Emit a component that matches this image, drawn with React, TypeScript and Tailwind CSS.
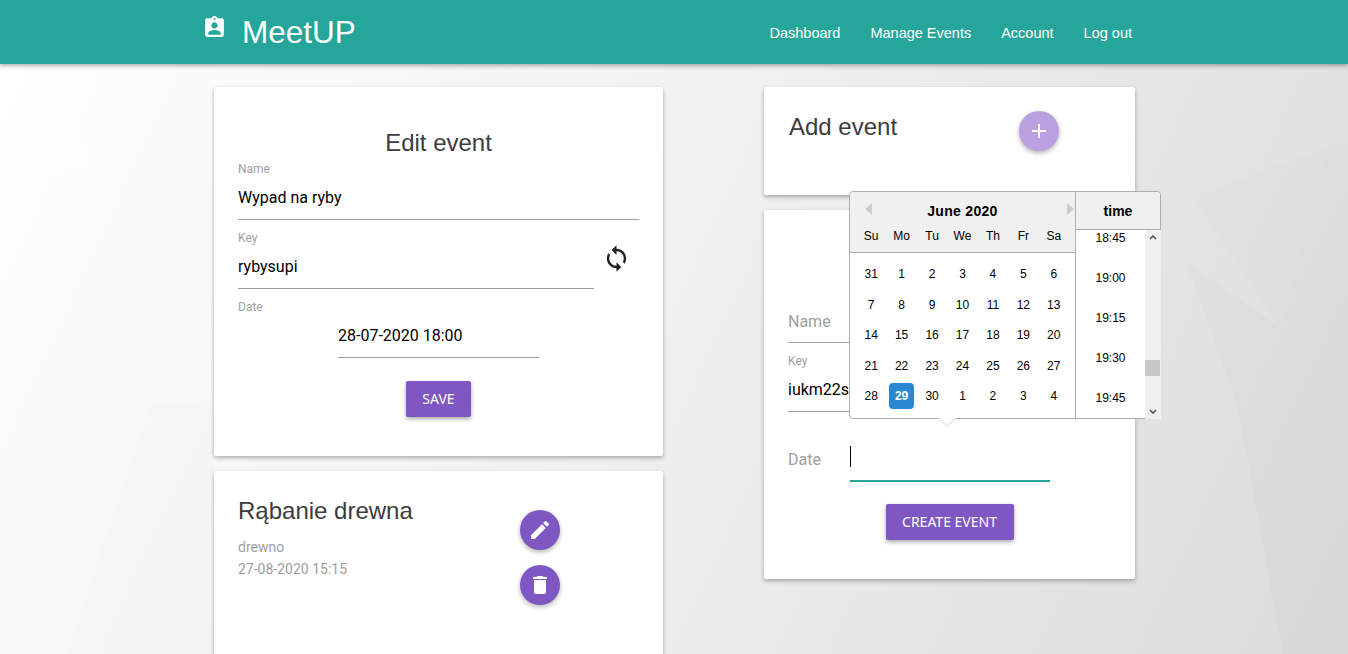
import { MdAssignmentInd, MdEdit, MdDelete, MdAdd, MdSync } from "react-icons/md";

const navLinks = ["Dashboard", "Manage Events", "Account", "Log out"];
const dayNames = ["Su", "Mo", "Tu", "We", "Th", "Fr", "Sa"];
const days = [31, 1, 2, 3, 4, 5, 6, 7, 8, 9, 10, 11, 12, 13, 14, 15, 16, 17, 18, 19, 20, 21, 22, 23, 24, 25, 26, 27, 28, 29, 30, 1, 2, 3, 4];
const times = ["18:45", "19:00", "19:15", "19:30", "19:45"];

function Field({ label, value, width }: { label: string; value: string; width: string }) {
  return (
    <div className={width}>
      <p className="text-[12px] leading-[14px] text-[#9e9e9e]">{label}</p>
      <div className="h-[44px] border-b border-[#9e9e9e] pt-[10px] text-[16px] leading-[24px] text-black">{value}</div>
    </div>
  );
}

function Fab({ children, pale }: { children: React.ReactNode; pale?: boolean }) {
  return (
    <div className={`flex h-10 w-10 items-center justify-center rounded-full text-white shadow-[0_2px_5px_rgba(0,0,0,0.3)] ${pale ? "bg-[#b9a1e0]" : "bg-[#7e57c2]"}`}>
      {children}
    </div>
  );
}

function DatePicker() {
  return (
    <div className="absolute left-[85px] top-[-19px] z-10 flex h-[228px] w-[312px] rounded-[4px] border border-[#aeaeae] bg-white font-['Liberation_Sans',sans-serif] text-black">
      <div className="w-[226px] border-r border-[#aeaeae]">
        <div className="relative h-[61px] rounded-tl-[4px] border-b border-[#aeaeae] bg-[#f0f0f0]">
          <span className="absolute left-[15px] top-[11px] h-0 w-0 border-y-[6px] border-r-[7px] border-y-transparent border-r-[#ccc]" />
          <span className="absolute right-[1px] top-[11px] h-0 w-0 border-y-[6px] border-l-[7px] border-y-transparent border-l-[#ccc]" />
          <p className="pt-[11px] text-center text-[14px] font-bold leading-[16px] tracking-[0.3px]">June 2020</p>
          <div className="mt-[9px] grid grid-cols-7 pl-[6px] pr-[6px] text-[12px] leading-[16px]">
            {dayNames.map((d) => (
              <span key={d} className="text-center">{d}</span>
            ))}
          </div>
        </div>
        <div className="grid grid-cols-7 pl-[6px] pr-[6px] pt-[6px] text-[12px]">
          {days.map((d, i) => (
            <div key={i} className="flex h-[30.5px] items-center justify-center">
              <span className={`flex h-[26px] w-[25px] items-center justify-center rounded-[4px] ${d === 29 ? "bg-[#2a87d0] font-bold text-white" : ""}`}>{d}</span>
            </div>
          ))}
        </div>
      </div>
      <div className="flex w-[84px] flex-col">
        <div className="flex h-[38px] items-center justify-center rounded-tr-[4px] border-b border-[#aeaeae] bg-[#f0f0f0] pt-[1px] text-[14px] font-bold">time</div>
        <div className="flex flex-1">
          <div className="relative flex-1 overflow-hidden">
            <div className="mt-[-12px] flex flex-col items-center text-[12px]">
              {times.map((t) => (
                <div key={t} className="flex h-10 items-center justify-center">{t}</div>
              ))}
            </div>
          </div>
          <div className="relative mb-[-1px] mr-[-1px] flex w-[16px] flex-col items-center justify-between bg-[#f0f0f0] py-[5px]">
            <svg width="8" height="5" viewBox="0 0 8 5"><path d="M1 4l3-3 3 3" fill="none" stroke="#555" strokeWidth="1.6" /></svg>
            <div className="absolute left-0 top-[130px] h-[16px] w-[15px] bg-[#c8c8c8]" />
            <svg width="8" height="5" viewBox="0 0 8 5"><path d="M1 1l3 3 3-3" fill="none" stroke="#555" strokeWidth="1.6" /></svg>
          </div>
        </div>
      </div>
      <svg className="absolute bottom-[-9px] left-[88px]" width="18" height="9" viewBox="0 0 18 9">
        <path d="M0 0l9 8 9-8" fill="#fff" stroke="#cfcfcf" />
      </svg>
    </div>
  );
}

export default function App() {
  return (
    <div className="relative h-[654px] w-full overflow-hidden bg-[linear-gradient(115deg,#ffffff_0%,#f0f0f0_50%,#dadada_100%)] font-['Roboto',sans-serif]">
      <svg className="absolute inset-0" width="1348" height="654" viewBox="0 0 1348 654">
        <polygon points="1327,147 1348,147 1348,654 1283,654 1237,404 1280,327" fill="#000" opacity="0.01" />
        <polygon points="1192,196 1327,147 1280,327" fill="#000" opacity="0.006" />
        <polygon points="1185,261 1280,327 1237,404" fill="#000" opacity="0.012" />
        <polygon points="150,405 214,400 214,654 67,654" fill="#000" opacity="0.006" />
        <polygon points="0,64 67,64 88,167 0,185" fill="#fff" opacity="0.3" />
      </svg>

      <nav className="relative z-20 flex h-16 items-center bg-[#26a69a] pl-[202px] pr-[216px] font-['Liberation_Sans',sans-serif] text-white shadow-[0_2px_4px_rgba(0,0,0,0.3)]">
        <MdAssignmentInd className="mt-[-10px] text-[25px]" />
        <span className="ml-[15px] text-[31.5px] leading-[64px]">MeetUP</span>
        <div className="ml-auto mt-[3px] flex gap-[30px] text-[14.5px]">
          {navLinks.map((l) => (
            <a key={l}>{l}</a>
          ))}
        </div>
      </nav>

      <main className="relative flex gap-[101px] pl-[214px] pt-[23px]">
        <div className="flex w-[449px] flex-col gap-[15px]">
          <section className="h-[369px] rounded-[2px] bg-white px-6 pt-[41px] shadow-[0_2px_4px_rgba(0,0,0,0.3)]">
            <h2 className="text-center font-['Liberation_Sans',sans-serif] text-[24px] leading-[30px] text-[#3c3c3c]">Edit event</h2>
            <div className="mt-[4px] flex flex-col gap-[11px]">
              <Field label="Name" value="Wypad na ryby" width="w-full" />
              <div className="flex items-center">
                <Field label="Key" value="rybysupi" width="w-[356px]" />
                <MdSync className="mb-[4px] ml-[8px] text-[29px] text-[#212121]" />
              </div>
              <div>
                <p className="text-[12px] leading-[14px] text-[#9e9e9e]">Date</p>
                <div className="ml-[100px] h-[44px] w-[201px] border-b border-[#9e9e9e] pt-[10px] text-[16px] leading-[24px] text-black">28-07-2020 18:00</div>
              </div>
            </div>
            <button className="mx-auto mt-[23px] flex h-9 w-[65px] items-center justify-center rounded-[2px] bg-[#7e57c2] pb-[1px] font-['Noto_Sans',sans-serif] text-[14px] text-white shadow-[0_2px_4px_rgba(0,0,0,0.35)]">SAVE</button>
          </section>

          <section className="flex h-[300px] rounded-[2px] bg-white pl-6 pt-[24px] shadow-[0_2px_4px_rgba(0,0,0,0.3)]">
            <div className="w-[282px]">
              <h2 className="font-['Liberation_Sans',sans-serif] text-[24px] leading-[32px] text-[#3c3c3c]">Rąbanie drewna</h2>
              <p className="mt-[9px] text-[14px] leading-[22px] text-[#9e9e9e]">drewno</p>
              <p className="text-[14px] leading-[22px] text-[#9e9e9e]">27-08-2020 15:15</p>
            </div>
            <div className="mt-[15px] flex flex-col gap-[15px]">
              <Fab><MdEdit className="text-[24px]" /></Fab>
              <Fab><MdDelete className="text-[24px]" /></Fab>
            </div>
          </section>
        </div>

        <div className="flex w-[371px] flex-col gap-[15px]">
          <section className="flex h-[108px] rounded-[2px] bg-white pl-[25px] pt-[24px] shadow-[0_2px_4px_rgba(0,0,0,0.3)]">
            <h2 className="w-[230px] font-['Liberation_Sans',sans-serif] text-[24px] leading-[32px] text-[#3c3c3c]">Add event</h2>
            <Fab pale><MdAdd className="text-[24px]" /></Fab>
          </section>

          <section className="relative h-[369px] rounded-[2px] bg-white px-6 shadow-[0_2px_4px_rgba(0,0,0,0.3)]">
            <DatePicker />
            <div className="h-[133px] w-[120px] border-b border-[#9e9e9e] pt-[100px] text-[16px] leading-[24px] text-[#9e9e9e]">Name</div>
            <div className="mt-[11px]">
              <p className="text-[12px] leading-[14px] text-[#9e9e9e]">Key</p>
              <div className="h-[44px] w-[120px] overflow-hidden whitespace-nowrap border-b border-[#9e9e9e] pt-[10px] text-[16px] leading-[24px] text-black">iukm22sl</div>
            </div>
            <div className="mt-[23px] flex">
              <span className="w-[62px] pt-[13px] text-[16px] leading-[24px] text-[#9e9e9e]">Date</span>
              <div className="h-[47px] w-[200px] border-b-2 border-[#26a69a] pt-[11px]">
                <div className="h-[21px] w-px bg-black" />
              </div>
            </div>
            <button className="mx-auto mt-[22px] flex h-9 w-[128px] items-center justify-center rounded-[2px] bg-[#7e57c2] pb-[2px] font-['Noto_Sans',sans-serif] text-[14px] text-white shadow-[0_2px_4px_rgba(0,0,0,0.35)]">CREATE EVENT</button>
          </section>
        </div>
      </main>
    </div>
  );
}
